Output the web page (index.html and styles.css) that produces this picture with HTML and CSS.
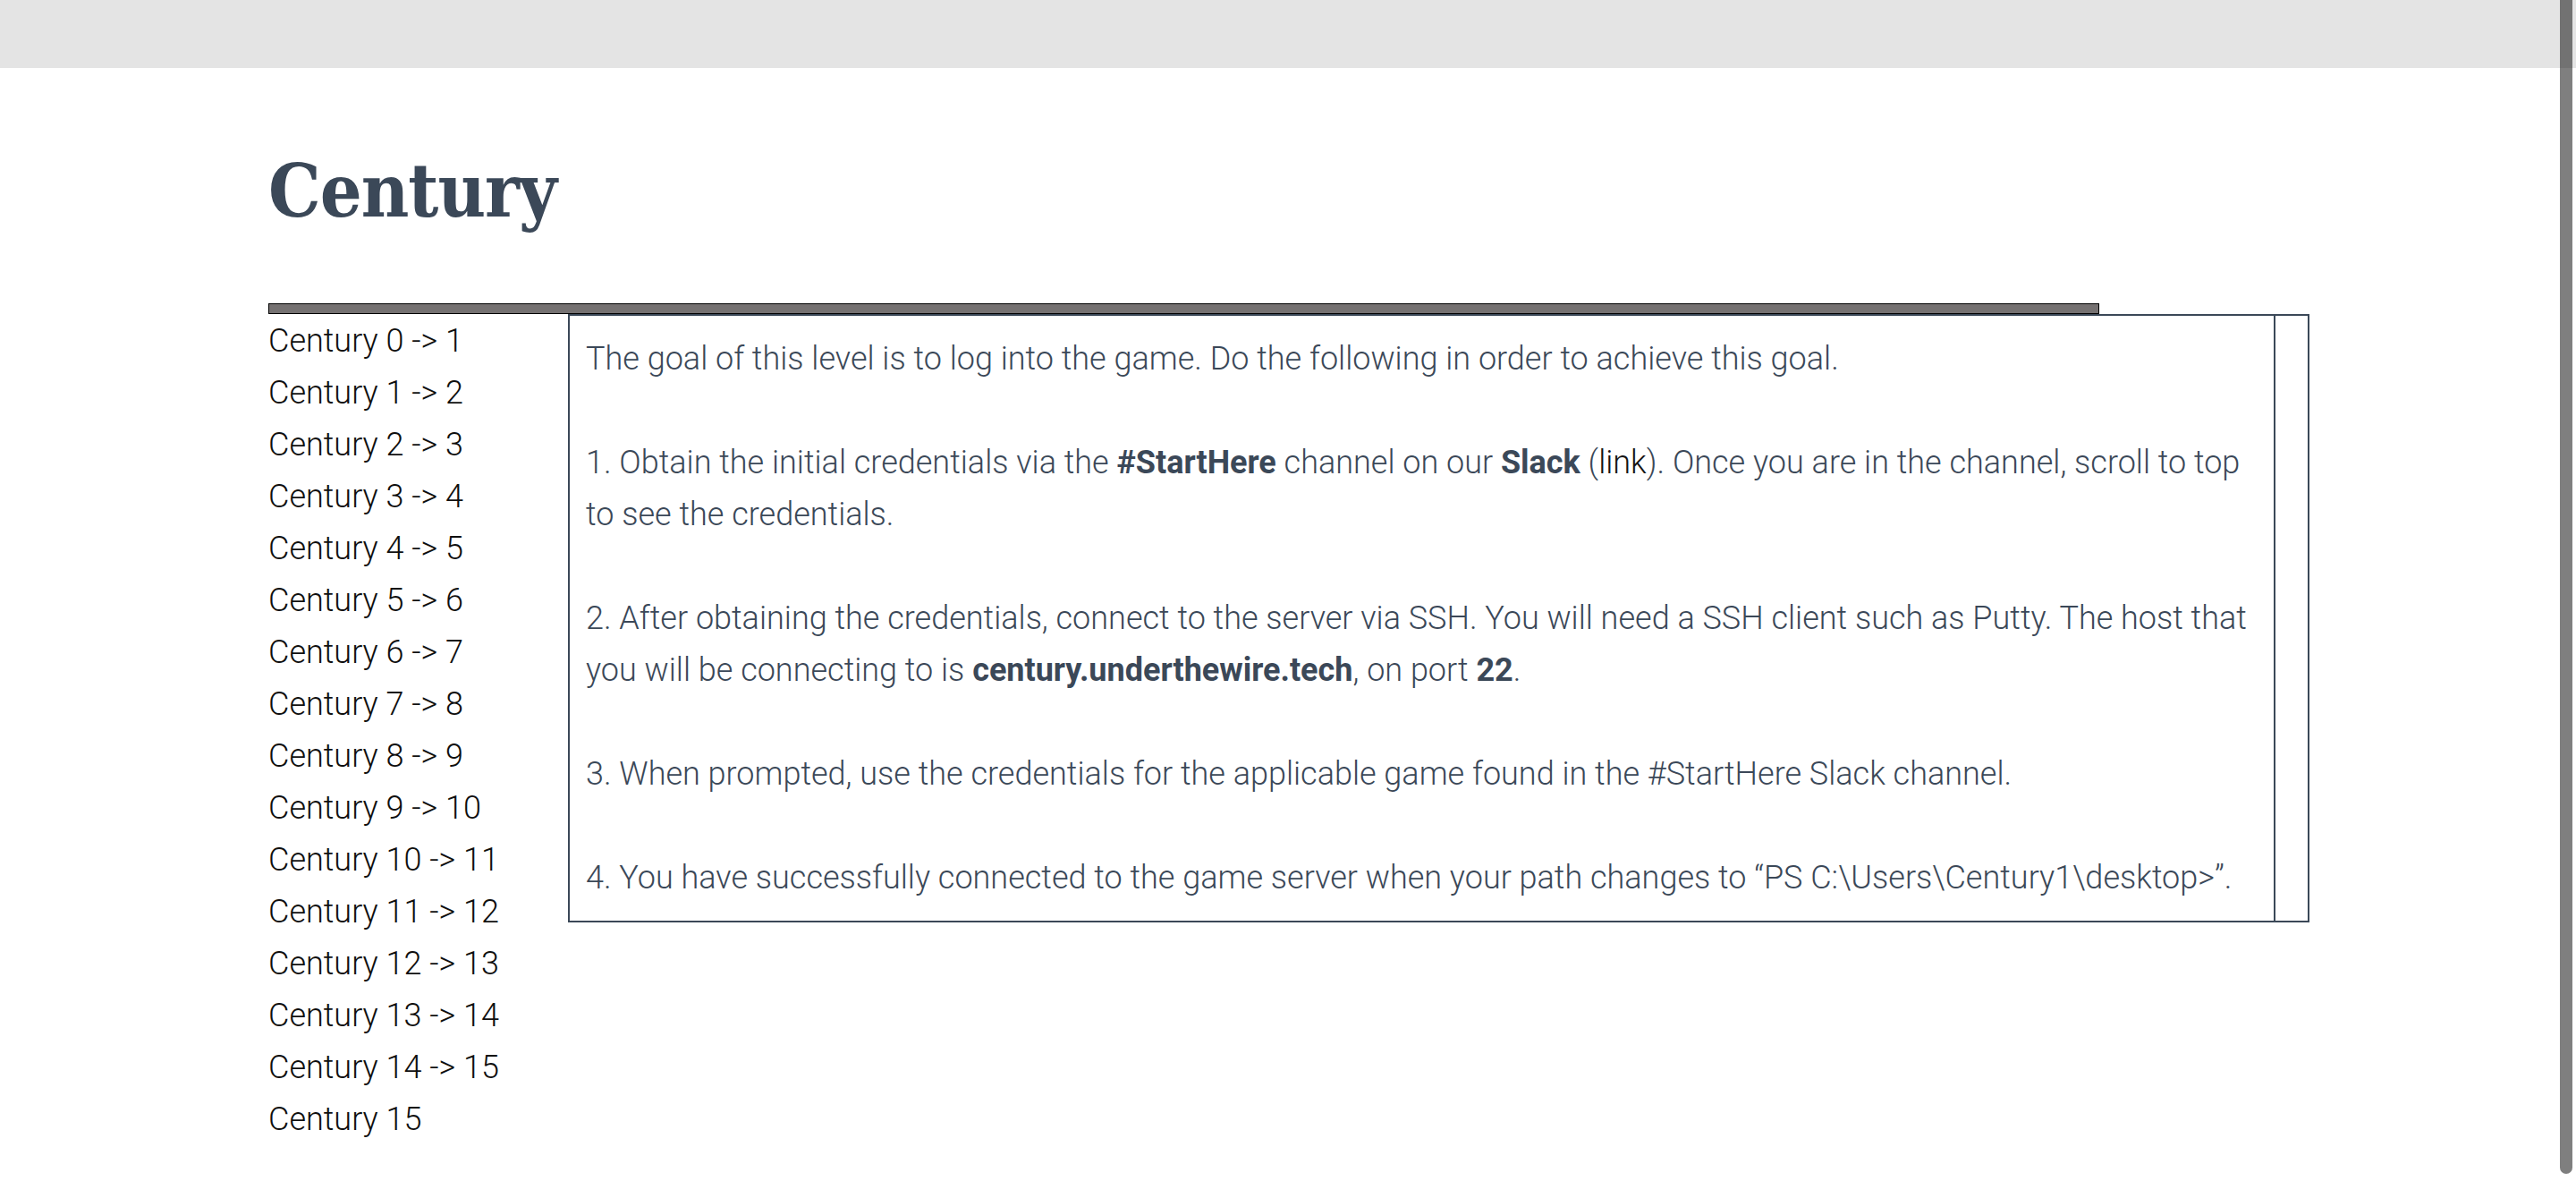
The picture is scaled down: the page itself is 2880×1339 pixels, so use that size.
FILE: index.html
```html
<!DOCTYPE html>
<html lang="en">
<head>
<meta charset="utf-8">
<title>Century</title>
<link rel="stylesheet" href="styles.css">
</head>
<body>
<header class="topbar"></header>
<main class="page">
  <h1 class="title">Century</h1>
  <hr class="rule">
  <div class="layout">
    <nav class="levels">
      <a class="level">Century 0 -&gt; 1</a>
      <a class="level">Century 1 -&gt; 2</a>
      <a class="level">Century 2 -&gt; 3</a>
      <a class="level">Century 3 -&gt; 4</a>
      <a class="level">Century 4 -&gt; 5</a>
      <a class="level">Century 5 -&gt; 6</a>
      <a class="level">Century 6 -&gt; 7</a>
      <a class="level">Century 7 -&gt; 8</a>
      <a class="level">Century 8 -&gt; 9</a>
      <a class="level">Century 9 -&gt; 10</a>
      <a class="level">Century 10 -&gt; 11</a>
      <a class="level">Century 11 -&gt; 12</a>
      <a class="level">Century 12 -&gt; 13</a>
      <a class="level">Century 13 -&gt; 14</a>
      <a class="level">Century 14 -&gt; 15</a>
      <a class="level">Century 15</a>
    </nav>
    <section class="panel">
      <div class="panel-text">The goal of this level is to log into the game. Do the following in order to achieve this goal.<br><br>1. Obtain the initial credentials via the <b>#StartHere</b> channel on our <b>Slack</b> (<a class="link">link</a>). Once you are in the channel, scroll to top to see the credentials.<br><br>2. After obtaining the credentials, connect to the server via SSH. You will need a SSH client such as Putty. The host that you will be connecting to is <b>century.underthewire.tech</b>, on port <b>22</b>.<br><br>3. When prompted, use the credentials for the applicable game found in the #StartHere Slack channel.<br><br>4. You have successfully connected to the game server when your path changes to “PS C:\Users\Century1\desktop&gt;”.</div>
      <div class="panel-side"></div>
    </section>
  </div>
</main>
<div class="scrollthumb"></div>
</body>
</html>
```
FILE: styles.css
```css
html {
  overflow: hidden;
}
body {
  margin: 0;
  background: #ffffff;
  font-family: Roboto, "Noto Sans", sans-serif;
  font-weight: 300;
}
.topbar {
  height: 76px;
  background: #e4e4e4;
}
.page {
  width: 2282px;
  margin: 0 0 0 300px;
}
.title {
  margin: 96px 0 85px 0;
  font-family: "DejaVu Serif Condensed", "DejaVu Serif", "Liberation Serif", serif;
  font-stretch: condensed;
  font-weight: 700;
  font-size: 82px;
  line-height: 82px;
  letter-spacing: -1px;
  color: #3b4858;
}
.rule {
  box-sizing: border-box;
  width: 2047px;
  height: 12px;
  margin: 0;
  border: 1px solid #000000;
  background: #757171;
}
.layout {
  display: flex;
  align-items: flex-start;
}
.levels {
  width: 335px;
  flex: none;
  display: flex;
  flex-direction: column;
  padding-top: 1px;
}
.level {
  font-size: 36px;
  line-height: 58px;
  color: #0f0f0f;
  font-weight: 300;
}
.panel {
  flex: 1;
  display: flex;
  border: 2px solid #3b4858;
}
.panel-text {
  flex: 1;
  padding: 19px 18px 19px 18px;
  font-size: 36px;
  line-height: 58px;
  color: #3b4858;
}
.panel-text b {
  font-weight: 700;
}
.link {
  color: #141414;
}
.panel-side {
  width: 36px;
  flex: none;
  border-left: 2px solid #3b4858;
}
.scrollthumb {
  position: fixed;
  top: 0;
  right: 4px;
  width: 14px;
  height: 1312px;
  background: rgba(0, 0, 0, 0.5);
  border-radius: 0 0 7px 7px;
}
```
